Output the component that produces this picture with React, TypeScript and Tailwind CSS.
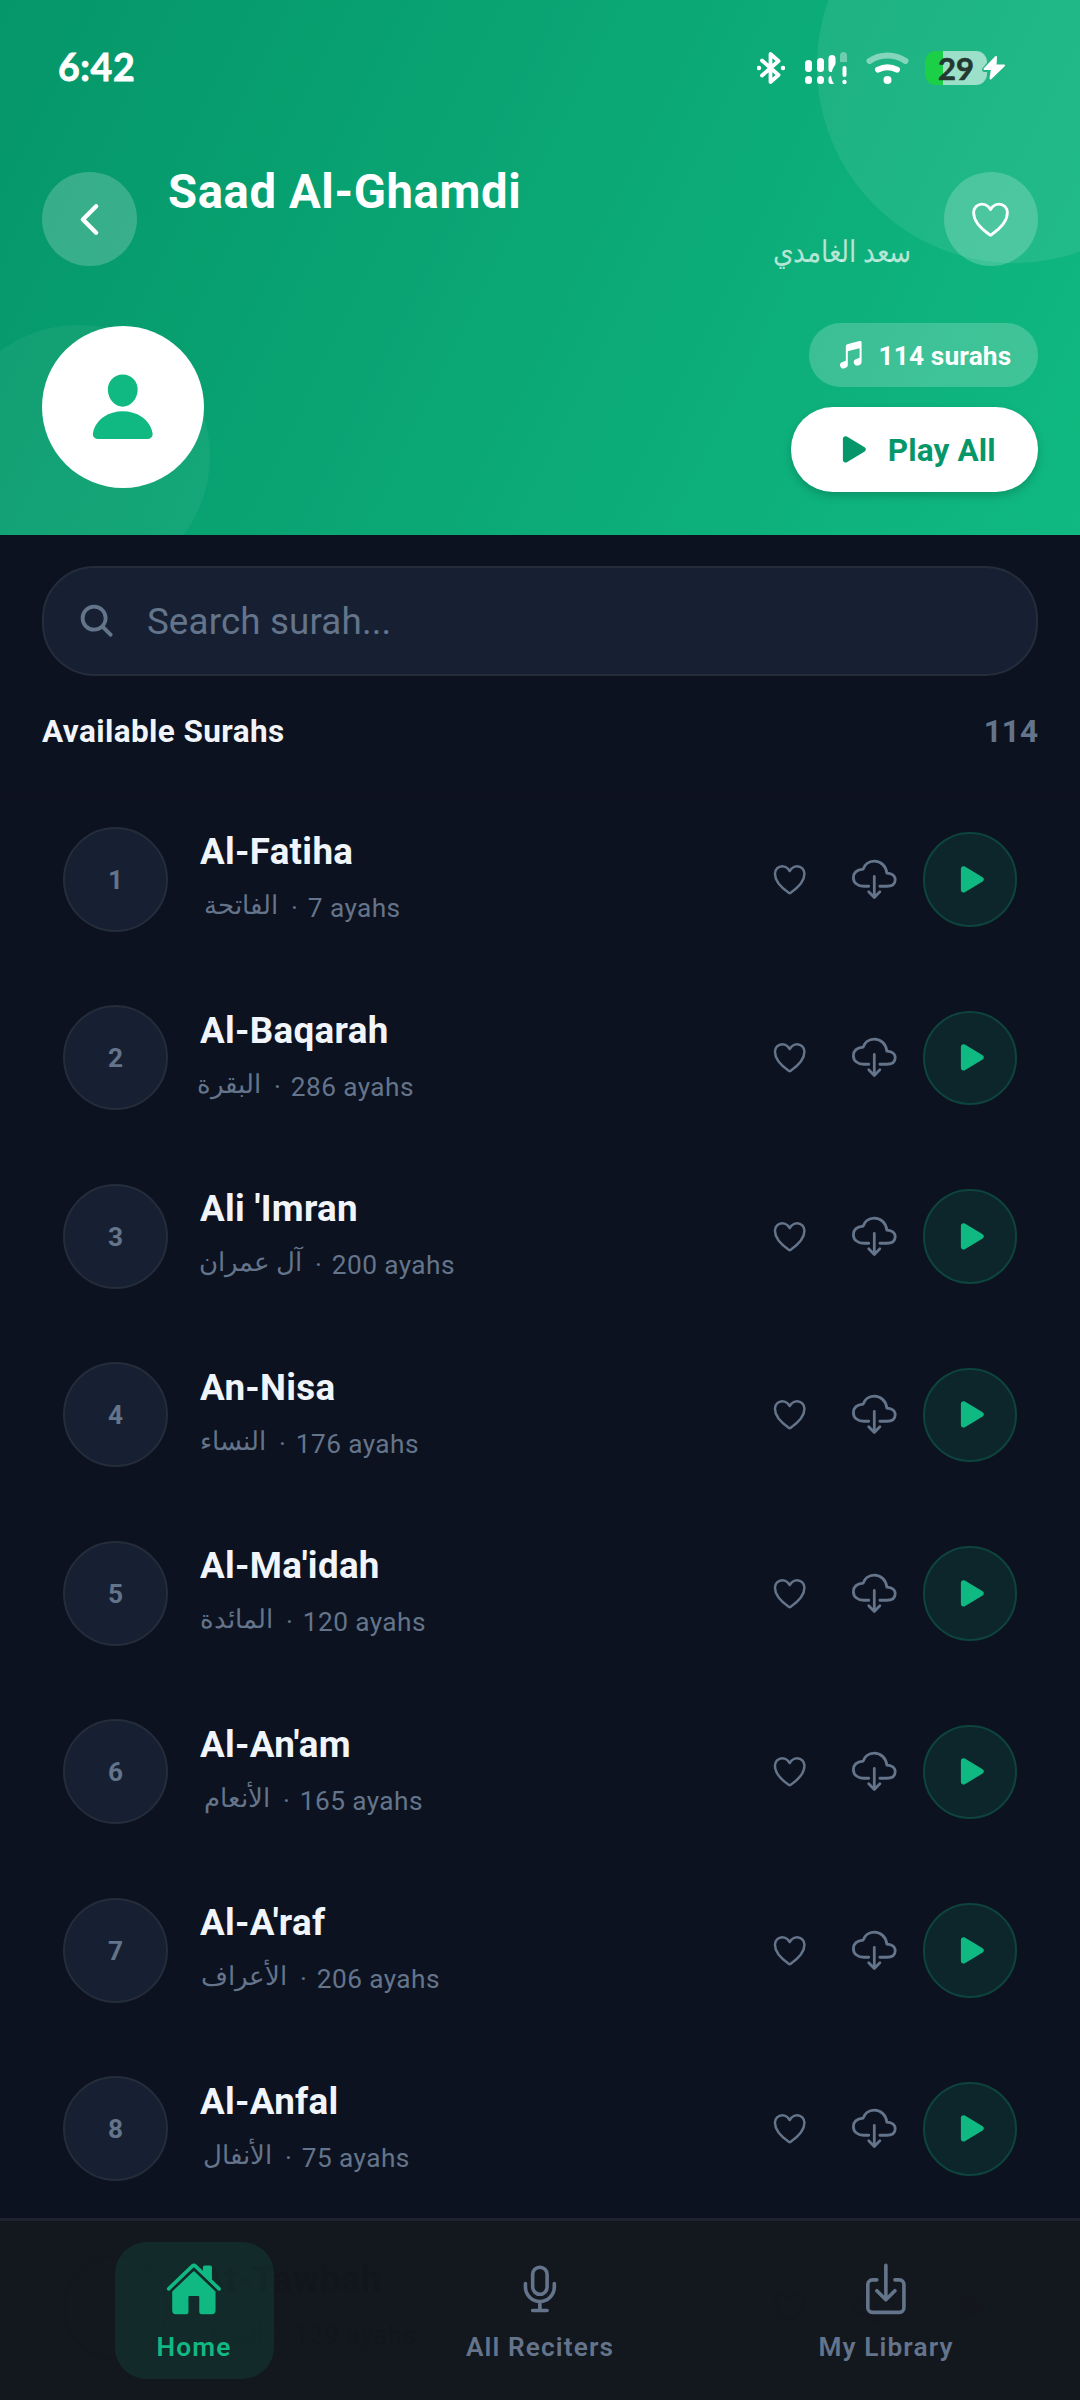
import React from 'react';
import {
  IoChevronBack,
  IoCloudDownloadOutline,
  IoDownloadOutline,
  IoHeartOutline,
  IoHome,
  IoMicOutline,
  IoMusicalNotes,
  IoPerson,
  IoPlay,
  IoSearch,
} from 'react-icons/io5';

const surahs = [
  { number: 1, name: 'Al-Fatiha', arabic: 'الفاتحة', arabicWidth: 'w-[78px]', ayahs: 7 },
  { number: 2, name: 'Al-Baqarah', arabic: 'البقرة', arabicWidth: 'w-[61px]', ayahs: 286 },
  { number: 3, name: "Ali 'Imran", arabic: 'آل عمران', arabicWidth: 'w-[102px]', ayahs: 200 },
  { number: 4, name: 'An-Nisa', arabic: 'النساء', arabicWidth: 'w-[66px]', ayahs: 176 },
  { number: 5, name: "Al-Ma'idah", arabic: 'المائدة', arabicWidth: 'w-[73px]', ayahs: 120 },
  { number: 6, name: "Al-An'am", arabic: 'الأنعام', arabicWidth: 'w-[70px]', ayahs: 165 },
  { number: 7, name: "Al-A'raf", arabic: 'الأعراف', arabicWidth: 'w-[87px]', ayahs: 206 },
  { number: 8, name: 'Al-Anfal', arabic: 'الأنفال', arabicWidth: 'w-[72px]', ayahs: 75 },
];

const StatusBar: React.FC = () => (
  <div className="flex h-[136px] items-center justify-between pl-[16px] pr-[32px] text-white">
    <span className="-mt-[3px] font-[Lato,sans-serif] text-[37.5px] font-bold leading-[48px] tracking-[0.6px] [-webkit-text-stroke:0.8px_white] [stroke-linejoin:round]">
      6:42
    </span>
    <div className="flex items-center">
      {/* Bluetooth */}
      <svg width="28" height="34" viewBox="0 0 28 34" fill="none" stroke="currentColor" strokeWidth="3.8" strokeLinecap="round" strokeLinejoin="round">
        <path d="M5 9.500L21.500 24L13.500 31V3L21.500 10L5 24.500" />
        <circle cx="2" cy="17" r="2.200" fill="currentColor" stroke="none" />
        <circle cx="26" cy="17" r="2.200" fill="currentColor" stroke="none" />
      </svg>
      {/* Signal */}
      <svg className="ml-[20px]" width="42" height="34" viewBox="0 0 42 34" fill="currentColor">
        <rect x="0" y="9" width="7" height="12" rx="3.5" />
        <rect x="0" y="25" width="7" height="8" rx="3.5" />
        <rect x="12" y="7" width="7" height="14" rx="3.5" />
        <rect x="12" y="25" width="7" height="8" rx="3.5" />
        <path d="M23.500 7.500a3.500 3.500 0 0 1 7 0V12c0 3-3 4-3.500 9h-1a2.500 2.500 0 0 1-2.500-2.500z" />
        <path d="M23.500 28c0-2 1-3 2.500-3 .5 3 1 5 3 8h-2.500a3 3 0 0 1-3-3z" />
        <path d="M35 4.500a3.500 3.500 0 0 1 7 0V11h-7z" opacity=".35" />
        <rect x="37.500" y="15" width="4" height="11" rx="2" />
        <circle cx="39.500" cy="31" r="2.200" />
      </svg>
      {/* Wi-Fi */}
      <svg className="ml-[19px]" width="43" height="34" viewBox="0 0 43 34" fill="none" stroke="currentColor" strokeLinecap="round">
        <path d="M3.500 10C14 2.500 29 2.500 39.500 10" strokeWidth="6" opacity=".45" />
        <path d="M12 18.700C18 15.600 25 15.600 31 18.700" strokeWidth="6" />
        <circle cx="21.500" cy="29" r="4" fill="currentColor" stroke="none" />
      </svg>
      {/* Battery */}
      <div className="relative ml-[16px] h-[34px] w-[81px]">
        <div className="flex h-[34px] w-[62px] items-center justify-center rounded-[11px] bg-gradient-to-r from-[#1bd046] from-29% to-[#9ce0c9] to-29%">
          <span className="font-[Lato,sans-serif] text-[31px] font-bold leading-[34px] text-[#24382f] [-webkit-text-stroke:0.6px_#24382f] [stroke-linejoin:round]">
            29
          </span>
        </div>
        <svg className="absolute right-0 top-[3px]" width="24" height="28" viewBox="0 0 24 28">
          <path
            d="M13.500 2.500L2.500 15.500h7.500l-1.500 9 13.500-13.500h-8l1-8z"
            fill="#22b685"
            stroke="#22b685"
            strokeWidth="5"
            strokeLinejoin="round"
          />
          <path
            d="M14 3L2.500 15h7.500l-1.500 9.500L22 11.500h-8.500z"
            fill="#fff"
            stroke="#fff"
            strokeWidth="2"
            strokeLinejoin="round"
          />
        </svg>
      </div>
    </div>
  </div>
);

const Header: React.FC = () => (
  <header className="relative h-[535px] overflow-hidden bg-[linear-gradient(116.35deg,#059669,#10b981)] px-[42px]">
    {/* Decorative circles */}
    <div className="absolute -right-[131px] -top-[131px] size-[394px] rounded-full bg-white/8" />
    <div className="absolute -bottom-[52px] -left-[52px] size-[262px] rounded-full bg-white/5" />

    <div className="relative">
      <StatusBar />

      <div className="mt-6 flex h-[118px] items-center">
        <button className="flex size-[94.5px] items-center justify-center rounded-full bg-white/20">
          <IoChevronBack className="size-[47px] text-white" />
        </button>
        <div className="flex-1 px-[31.5px]">
          <h1 className="text-[47.25px] font-bold leading-[55px] tracking-[0.6px] text-white">Saad Al-Ghamdi</h1>
          <p dir="rtl" className="origin-right scale-x-88 pr-px pt-[9px] text-[30px] leading-[45px] text-white/70">
            سعد الغامدي
          </p>
        </div>
        <button className="flex size-[94.5px] items-center justify-center rounded-full bg-white/20">
          <IoHeartOutline className="size-[45px] text-white" />
        </button>
      </div>

      <div className="mt-[45px] flex h-[168px] items-center justify-between">
        <div className="flex size-[162px] items-center justify-center rounded-full bg-white">
          <IoPerson className="size-[73.5px] text-[#10b981]" />
        </div>
        <div className="flex flex-col items-end gap-5 pt-px">
          <div className="flex h-[64px] w-[229px] items-center rounded-[31.5px] bg-white/20 pl-[26px] text-white">
            <IoMusicalNotes className="size-[31.5px]" />
            <span className="ml-3 pt-[3px] text-[26.25px] font-bold tracking-[0.15px]">114 surahs</span>
          </div>
          <button className="flex h-[85px] w-[247px] items-center rounded-[42px] bg-white pl-[45px] text-[#059669] shadow-[0_4px_10px_rgba(0,0,0,0.18)]">
            <IoPlay className="size-[36.75px]" />
            <span className="ml-[15px] pt-[3px] text-[31.5px] font-bold tracking-[0.15px]">Play All</span>
          </button>
        </div>
      </div>
    </div>
  </header>
);

interface SurahRowProps {
  number: number;
  name: string;
  arabic: string;
  arabicWidth: string;
  ayahs: number;
}

const SurahRow: React.FC<SurahRowProps> = ({ number, name, arabic, arabicWidth, ayahs }) => (
  <li className="flex h-[178.5px] items-center px-[63px] text-[#64748b]">
    <div className="flex size-[105px] items-center justify-center rounded-full border-[2.6px] border-[#252d3b] bg-[#172032] pt-[2px] text-[26.25px] font-bold">
      {number}
    </div>
    <div className="ml-8 flex-1">
      <h3 className="text-[36.75px] font-bold leading-[45px] tracking-[0.3px] text-[#f1f5f9]">{name}</h3>
      <p className="mt-[10px] flex h-[45px] items-center whitespace-nowrap leading-[42px]">
        <bdi className={`${arabicWidth} pb-[3px] text-[26px]`}>{arabic}</bdi>
        <span className="ml-[13px] pt-[3px] text-[26.25px]">·</span>
        <span className="ml-[10px] pt-[3px] text-[26.25px] tracking-[0.4px]">{ayahs} ayahs</span>
      </p>
    </div>
    <IoHeartOutline className="size-[39.4px]" />
    <IoCloudDownloadOutline className="ml-[43px] size-[44.6px]" />
    <button className="ml-[26px] flex size-[94.5px] items-center justify-center rounded-full border-[2.6px] border-[#0e443e] bg-[#0d262b] pl-[5px]">
      <IoPlay className="size-[36.75px] text-[#10b981]" />
    </button>
  </li>
);

// Row that is scrolled underneath the tab bar
const HiddenRow: React.FC = () => (
  <li className="flex h-[178.5px] items-center px-[63px] text-black">
    <div className="size-[105px] rounded-full border-[2.6px] border-black/30" />
    <div className="ml-8 flex-1">
      <h3 className="text-[36.75px] font-bold leading-[45px] tracking-[0.3px]">At-Tawbah</h3>
      <p className="mt-[10px] flex h-[45px] items-center leading-[42px] opacity-50">
        <bdi className="w-[64px] pb-[3px] text-[26px]">التوبة</bdi>
        <span className="ml-[13px] text-[26.25px]">·</span>
        <span className="ml-[10px] text-[26.25px] tracking-[0.4px]">129 ayahs</span>
      </p>
    </div>
    <IoHeartOutline className="size-[39.4px] opacity-30" />
    <IoCloudDownloadOutline className="ml-[43px] size-[44.6px] opacity-30" />
    <IoPlay className="ml-[57px] mr-[26px] size-[36.75px] opacity-30" />
  </li>
);

const tabs = [
  { label: 'Home', icon: IoHome, active: true },
  { label: 'All Reciters', icon: IoMicOutline, active: false },
  { label: 'My Library', icon: IoDownloadOutline, active: false },
];

const TabBar: React.FC = () => (
  <nav className="absolute inset-x-0 bottom-0 flex h-[182px] justify-center border-t-[3px] border-[#1e2330] bg-[#15181e]/87 px-[21px] pt-[21px]">
    {tabs.map(({ label, icon: Icon, active }) => (
      <div key={label} className="flex w-[346px] justify-center">
        <div
          className={
            active
              ? 'flex h-[137px] w-[159px] flex-col items-center rounded-[31.5px] bg-[#10b981]/12 pt-[18px] text-[#10b981]'
              : 'flex h-[137px] flex-col items-center pt-[18px] text-[#64748b]'
          }
        >
          <Icon className="size-[57.75px]" />
          <span className="mt-[9px] text-[26.25px] font-semibold leading-[40px] tracking-[1.1px]">{label}</span>
        </div>
      </div>
    ))}
  </nav>
);

export default function App() {
  return (
    <div className="relative h-[2400px] w-[1080px] overflow-hidden bg-[#0c121f] font-[Roboto,'Noto_Sans',sans-serif]">
      <Header />

      <section className="border-b border-[#0e101c] px-[42px] pt-[31px]">
        <div className="flex h-[110px] items-center rounded-[52.5px] border-[2.6px] border-[#252d3b] bg-[#172032] pl-[33px] text-[#64748b]">
          <IoSearch className="size-[39.4px]" />
          <span className="ml-[30.5px] pt-px text-[36.75px] tracking-[0.15px]">Search surah...</span>
        </div>
        <div className="mt-[37px] flex h-[80px] items-start justify-between pt-px text-[31.5px] font-bold leading-9">
          <h2 className="tracking-[0.4px] text-[#f1f5f9]">Available Surahs</h2>
          <span className="text-[#64748b]">114</span>
        </div>
      </section>

      <ul className="-mt-[4px]">
        {surahs.map((surah) => (
          <SurahRow key={surah.number} {...surah} />
        ))}
        <HiddenRow />
      </ul>

      <TabBar />
    </div>
  );
}
